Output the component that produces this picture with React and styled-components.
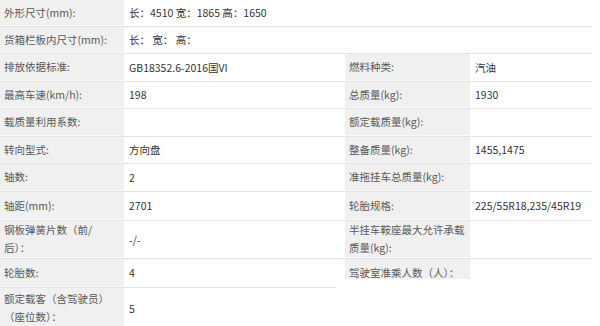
import React from 'react';
import styled, { createGlobalStyle } from 'styled-components';

const GlobalStyle = createGlobalStyle`
  body {
    margin: 0;
    background: #fff;
    font-family: "Noto Sans CJK SC", "Noto Sans", sans-serif;
    font-size: 10.5px;
  }
`;

const Table = styled.div`
  width: 592px;
  display: flex;
  flex-direction: column;
`;

const Row = styled.div`
  display: flex;
  align-items: flex-start;
  height: ${(props) => props.h}px;
`;

const Pair = styled.div`
  display: flex;
  width: ${(props) => props.w}px;
  height: ${(props) => (props.short ? `${props.short}px` : '100%')};
  padding-left: ${(props) => props.pad || 0}px;
  box-sizing: border-box;
  border-bottom: ${(props) => (props.noLine ? 'none' : '1px solid #e3e3e3')};
`;

const Label = styled.div`
  width: ${(props) => props.w}px;
  flex-shrink: 0;
  box-sizing: border-box;
  padding: ${(props) => `${props.top || 0}px ${props.right || 3}px 0 4px`};
  display: flex;
  align-items: ${(props) => (props.top ? 'flex-start' : 'center')};
  background: #f0f0f0;
  color: #585858;
  line-height: 18px;
  border-bottom: ${(props) => (props.noLine ? 'none' : '1px solid #fafafa')};
`;

const Value = styled.div`
  flex: 1;
  box-sizing: border-box;
  padding: 0 4px 0 5px;
  display: flex;
  align-items: center;
  color: #333;
  line-height: 18px;
  background: #fff;
`;

const rows = [
  { h: 27, full: ['外形尺寸(mm):', '长：4510 宽：1865 高：1650'] },
  { h: 27, full: ['货箱栏板内尺寸(mm):', '长： 宽： 高：'] },
  { h: 28, left: ['排放依据标准:', 'GB18352.6-2016国VI'], right: ['燃料种类:', '汽油'] },
  { h: 27, left: ['最高车速(km/h):', '198'], right: ['总质量(kg):', '1930'] },
  { h: 28, left: ['载质量利用系数:', ''], right: ['额定载质量(kg):', ''] },
  { h: 27, left: ['转向型式:', '方向盘'], right: ['整备质量(kg):', '1455,1475'] },
  { h: 28, left: ['轴数:', '2'], right: ['准拖挂车总质量(kg):', ''] },
  { h: 29, left: ['轴距(mm):', '2701'], right: ['轮胎规格:', '225/55R18,235/45R19'] },
  { h: 38, left: ['钢板弹簧片数（前/后）：', '-/-'], right: ['半挂车鞍座最大允许承载质量(kg):', ''] },
  { h: 29, left: ['轮胎数:', '4'], right: ['驾驶室准乘人数（人）：', null], short: 20 },
  { h: 42, left: ['额定载客（含驾驶员）（座位数）：', '5'] },
];

const App = () => (
  <>
    <GlobalStyle />
    <Table>
      {rows.map((r, i) => (
        <Row key={i} h={r.h}>
          {r.full && (
            <Pair w={592}>
              <Label w={124}>{r.full[0]}</Label>
              <Value>{r.full[1]}</Value>
            </Pair>
          )}
          {r.left && (
            <Pair w={336}>
              <Label w={124} right={13}>{r.left[0]}</Label>
              <Value>{r.left[1]}</Value>
            </Pair>
          )}
          {r.right && (
            <Pair w={256} pad={9} short={r.short} noLine={!!r.short}>
              <Label w={125} top={r.short ? 5 : 0} noLine={!!r.short}>
                {r.right[0]}
              </Label>
              {r.right[1] !== null && <Value>{r.right[1]}</Value>}
            </Pair>
          )}
        </Row>
      ))}
    </Table>
  </>
);

export default App;
